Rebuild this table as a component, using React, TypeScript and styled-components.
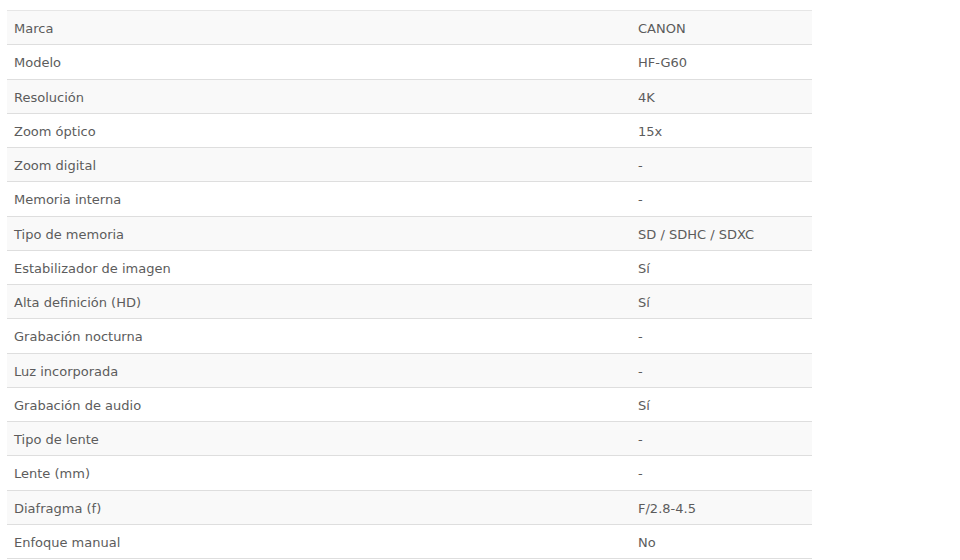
import React from 'react';
import styled, { createGlobalStyle } from 'styled-components';

const GlobalStyle = createGlobalStyle`
  body {
    margin: 0;
    background: #fff;
    font-family: "DejaVu Sans", "Noto Sans", sans-serif;
  }
`;

const Wrapper = styled.div`
  padding: 10px 0 0 7px;
`;

const SpecTable = styled.table`
  width: 805px;
  border-collapse: collapse;
  border-top: 1px solid #e6e6e6;
  font-size: 13px;
  color: #5c5c5c;
`;

const Row = styled.tr<{ $striped: boolean }>`
  background: ${({ $striped }) => ($striped ? '#f9f9f9' : '#fff')};
  border-bottom: 1px solid #dedede;
`;

const Cell = styled.td<{ $value?: boolean }>`
  padding: 9px 7px 7px;
  line-height: 17.25px;
  width: ${({ $value }) => ($value ? '167px' : 'auto')};
  vertical-align: middle;
`;

const specs: [string, string][] = [
  ['Marca', 'CANON'],
  ['Modelo', 'HF-G60'],
  ['Resolución', '4K'],
  ['Zoom óptico', '15x'],
  ['Zoom digital', '-'],
  ['Memoria interna', '-'],
  ['Tipo de memoria', 'SD / SDHC / SDXC'],
  ['Estabilizador de imagen', 'Sí'],
  ['Alta definición (HD)', 'Sí'],
  ['Grabación nocturna', '-'],
  ['Luz incorporada', '-'],
  ['Grabación de audio', 'Sí'],
  ['Tipo de lente', '-'],
  ['Lente (mm)', '-'],
  ['Diafragma (f)', 'F/2.8-4.5'],
  ['Enfoque manual', 'No'],
];

const App: React.FC = () => (
  <>
    <GlobalStyle />
    <Wrapper>
      <SpecTable>
        <tbody>
          {specs.map(([label, value], i) => (
            <Row key={label} $striped={i % 2 === 0}>
              <Cell>{label}</Cell>
              <Cell $value>{value}</Cell>
            </Row>
          ))}
        </tbody>
      </SpecTable>
    </Wrapper>
  </>
);

export default App;
